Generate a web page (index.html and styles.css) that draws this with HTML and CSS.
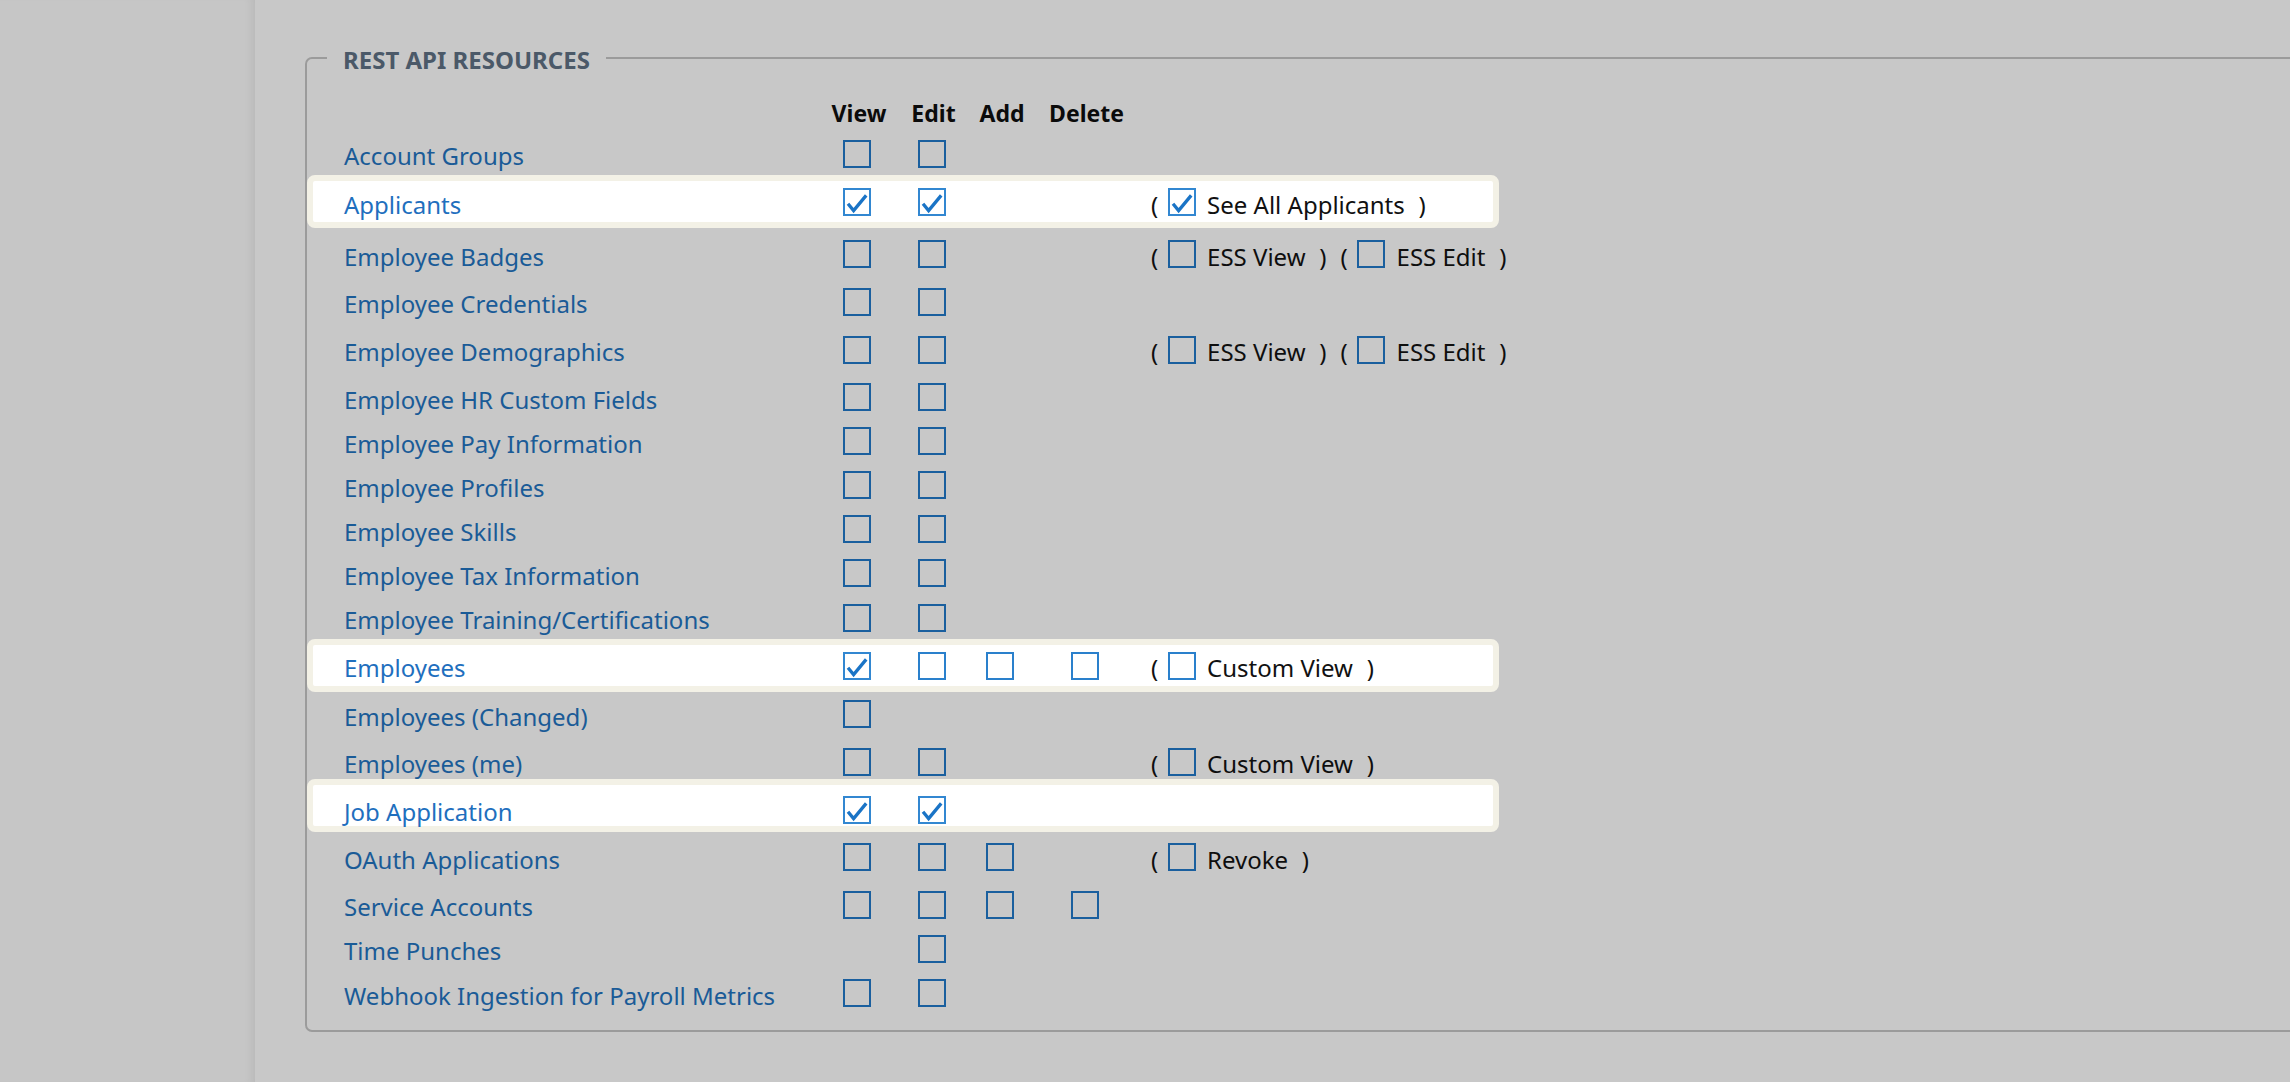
FILE: index.html
```html
<!DOCTYPE html>
<html lang="en">
<head>
<meta charset="utf-8">
<title>REST API Resources</title>
<link rel="stylesheet" href="styles.css">
</head>
<body>
<div class="layout">
  <aside class="sidebar"></aside>
  <main class="main">
    <fieldset class="resources">
      <legend>REST API RESOURCES</legend>
      <div class="perm-table">
        <div class="perm-row head">
          <span></span><span class="col-h">View</span><span class="col-h">Edit</span><span class="col-h">Add</span><span class="col-h">Delete</span><span></span>
        </div>

        <div class="perm-row">
          <a class="res-name">Account Groups</a>
          <span class="cell"><span class="cb"></span></span>
          <span class="cell"><span class="cb"></span></span>
          <span class="cell"></span><span class="cell"></span><span class="opts"></span>
        </div>

        <div class="perm-row opt-row hl big">
          <a class="res-name">Applicants</a>
          <span class="cell"><span class="cb on"><svg viewBox="2 2 24 24"><path d="M5 15.8L10.6 22.6L23.2 7.4"/></svg></span></span>
          <span class="cell"><span class="cb on"><svg viewBox="2 2 24 24"><path d="M5 15.8L10.6 22.6L23.2 7.4"/></svg></span></span>
          <span class="cell"></span><span class="cell"></span>
          <span class="opts">
            <span class="opt"><span class="paren">(</span><span class="cb on"><svg viewBox="2 2 24 24"><path d="M5 15.8L10.6 22.6L23.2 7.4"/></svg></span><span class="opt-label">See All Applicants</span><span class="paren close">)</span></span>
          </span>
        </div>

        <div class="perm-row opt-row">
          <a class="res-name">Employee Badges</a>
          <span class="cell"><span class="cb"></span></span>
          <span class="cell"><span class="cb"></span></span>
          <span class="cell"></span><span class="cell"></span>
          <span class="opts">
            <span class="opt"><span class="paren">(</span><span class="cb"></span><span class="opt-label">ESS View</span><span class="paren close">)</span></span>
            <span class="opt"><span class="paren">(</span><span class="cb"></span><span class="opt-label">ESS Edit</span><span class="paren close">)</span></span>
          </span>
        </div>

        <div class="perm-row">
          <a class="res-name">Employee Credentials</a>
          <span class="cell"><span class="cb"></span></span>
          <span class="cell"><span class="cb"></span></span>
          <span class="cell"></span><span class="cell"></span><span class="opts"></span>
        </div>

        <div class="perm-row opt-row">
          <a class="res-name">Employee Demographics</a>
          <span class="cell"><span class="cb"></span></span>
          <span class="cell"><span class="cb"></span></span>
          <span class="cell"></span><span class="cell"></span>
          <span class="opts">
            <span class="opt"><span class="paren">(</span><span class="cb"></span><span class="opt-label">ESS View</span><span class="paren close">)</span></span>
            <span class="opt"><span class="paren">(</span><span class="cb"></span><span class="opt-label">ESS Edit</span><span class="paren close">)</span></span>
          </span>
        </div>

        <div class="perm-row">
          <a class="res-name">Employee HR Custom Fields</a>
          <span class="cell"><span class="cb"></span></span>
          <span class="cell"><span class="cb"></span></span>
          <span class="cell"></span><span class="cell"></span><span class="opts"></span>
        </div>

        <div class="perm-row">
          <a class="res-name">Employee Pay Information</a>
          <span class="cell"><span class="cb"></span></span>
          <span class="cell"><span class="cb"></span></span>
          <span class="cell"></span><span class="cell"></span><span class="opts"></span>
        </div>

        <div class="perm-row">
          <a class="res-name">Employee Profiles</a>
          <span class="cell"><span class="cb"></span></span>
          <span class="cell"><span class="cb"></span></span>
          <span class="cell"></span><span class="cell"></span><span class="opts"></span>
        </div>

        <div class="perm-row">
          <a class="res-name">Employee Skills</a>
          <span class="cell"><span class="cb"></span></span>
          <span class="cell"><span class="cb"></span></span>
          <span class="cell"></span><span class="cell"></span><span class="opts"></span>
        </div>

        <div class="perm-row">
          <a class="res-name">Employee Tax Information</a>
          <span class="cell"><span class="cb"></span></span>
          <span class="cell"><span class="cb"></span></span>
          <span class="cell"></span><span class="cell"></span><span class="opts"></span>
        </div>

        <div class="perm-row">
          <a class="res-name">Employee Training/Certifications</a>
          <span class="cell"><span class="cb"></span></span>
          <span class="cell"><span class="cb"></span></span>
          <span class="cell"></span><span class="cell"></span><span class="opts"></span>
        </div>

        <div class="perm-row opt-row hl big">
          <a class="res-name">Employees</a>
          <span class="cell"><span class="cb on"><svg viewBox="2 2 24 24"><path d="M5 15.8L10.6 22.6L23.2 7.4"/></svg></span></span>
          <span class="cell"><span class="cb"></span></span>
          <span class="cell"><span class="cb"></span></span>
          <span class="cell"><span class="cb"></span></span>
          <span class="opts">
            <span class="opt"><span class="paren">(</span><span class="cb"></span><span class="opt-label">Custom View</span><span class="paren close">)</span></span>
          </span>
        </div>

        <div class="perm-row">
          <a class="res-name">Employees (Changed)</a>
          <span class="cell"><span class="cb"></span></span>
          <span class="cell"></span>
          <span class="cell"></span><span class="cell"></span><span class="opts"></span>
        </div>

        <div class="perm-row opt-row">
          <a class="res-name">Employees (me)</a>
          <span class="cell"><span class="cb"></span></span>
          <span class="cell"><span class="cb"></span></span>
          <span class="cell"></span><span class="cell"></span>
          <span class="opts">
            <span class="opt"><span class="paren">(</span><span class="cb"></span><span class="opt-label">Custom View</span><span class="paren close">)</span></span>
          </span>
        </div>

        <div class="perm-row hl">
          <a class="res-name">Job Application</a>
          <span class="cell"><span class="cb on"><svg viewBox="2 2 24 24"><path d="M5 15.8L10.6 22.6L23.2 7.4"/></svg></span></span>
          <span class="cell"><span class="cb on"><svg viewBox="2 2 24 24"><path d="M5 15.8L10.6 22.6L23.2 7.4"/></svg></span></span>
          <span class="cell"></span><span class="cell"></span><span class="opts"></span>
        </div>

        <div class="perm-row opt-row">
          <a class="res-name">OAuth Applications</a>
          <span class="cell"><span class="cb"></span></span>
          <span class="cell"><span class="cb"></span></span>
          <span class="cell"><span class="cb"></span></span>
          <span class="cell"></span>
          <span class="opts">
            <span class="opt"><span class="paren">(</span><span class="cb"></span><span class="opt-label">Revoke</span><span class="paren close">)</span></span>
          </span>
        </div>

        <div class="perm-row">
          <a class="res-name">Service Accounts</a>
          <span class="cell"><span class="cb"></span></span>
          <span class="cell"><span class="cb"></span></span>
          <span class="cell"><span class="cb"></span></span>
          <span class="cell"><span class="cb"></span></span>
          <span class="opts"></span>
        </div>

        <div class="perm-row">
          <a class="res-name">Time Punches</a>
          <span class="cell"></span>
          <span class="cell"><span class="cb"></span></span>
          <span class="cell"></span><span class="cell"></span><span class="opts"></span>
        </div>

        <div class="perm-row">
          <a class="res-name">Webhook Ingestion for Payroll Metrics</a>
          <span class="cell"><span class="cb"></span></span>
          <span class="cell"><span class="cb"></span></span>
          <span class="cell"></span><span class="cell"></span><span class="opts"></span>
        </div>
      </div>
    </fieldset>
  </main>
</div>
</body>
</html>
```

FILE: styles.css
```css
*, *::before, *::after { box-sizing: border-box; }

html, body {
  margin: 0;
  height: 100%;
}

body {
  background: #c8c8c8;
  font-family: "Noto Sans", "Open Sans", sans-serif;
  font-size: 24px;
  color: #0e0e0e;
  overflow: hidden;
}

.layout {
  display: flex;
  height: 100%;
}

.sidebar {
  width: 255px;
  flex: none;
  background: #c6c6c6;
  box-shadow: inset -9px 0 8px -6px rgba(0, 0, 0, 0.07);
}

.main {
  flex: 1;
  min-width: 0;
  overflow: hidden;
  padding: 40.5px 0 0 50px;
}

.resources {
  width: 2100px;
  margin: 0;
  padding: 22px 0 14.7px;
  border: 2px solid #9b9b9b;
  border-radius: 7px;
  min-width: 0;
}

.resources legend {
  margin-left: 20px;
  padding: 3px 16px 0;
  font-weight: 700;
  font-size: 24px;
  line-height: 32px;
  color: #4b5968;
}

.perm-table {
  width: 1192px;
}

.perm-row {
  position: relative;
  z-index: 0;
  display: grid;
  grid-template-columns: 475px 80px 69px 68px 101px 1fr;
  align-items: center;
  height: 44.05px;
  padding-left: 37px;
}

.perm-row.opt-row { height: 51.4px; }
.perm-row.big { height: 52.5px; }

.perm-row.head {
  height: 31px;
  margin-bottom: 3.4px;
}

.col-h {
  text-align: center;
  font-weight: 700;
  font-size: 23px;
  line-height: 31px;
  color: #0b0b0b;
}

.perm-row.hl::before {
  content: "";
  position: absolute;
  left: 0;
  right: 0;
  bottom: 0;
  height: 53px;
  z-index: -1;
  background: #ffffff;
  border: 6px solid #f3f1e6;
  border-radius: 8px;
}

.res-name {
  justify-self: start;
  padding-top: 4px;
  color: #1a5b97;
  text-decoration: none;
  white-space: nowrap;
}

.hl .res-name { color: #1f6fbe; }

.cell {
  display: flex;
  justify-content: center;
  align-items: center;
}

.cell .cb { margin-right: 4px; }

.cb {
  display: block;
  flex: none;
  width: 28px;
  height: 28px;
  border: 2px solid #1a5f9e;
  background: transparent;
}

.hl .cb { border-color: #2a80cc; background: #ffffff; }
.hl .cb.on { border-color: #3287d1; }

.cb svg {
  display: block;
  width: 24px;
  height: 24px;
  fill: none;
  stroke: #1a74c6;
  stroke-width: 3.3;
  stroke-linejoin: miter;
}

.opts {
  display: flex;
  align-items: center;
  gap: 14px;
  padding-left: 14px;
  white-space: nowrap;
}

.opt {
  display: flex;
  align-items: center;
}

.paren,
.opt-label {
  padding-top: 4px;
  color: #0e0e0e;
}

.hl .paren,
.hl .opt-label { color: #111111; }

.opt .cb {
  margin: 0 11.3px 0 9.6px;
}

.paren.close {
  margin-left: 13.7px;
}
```
